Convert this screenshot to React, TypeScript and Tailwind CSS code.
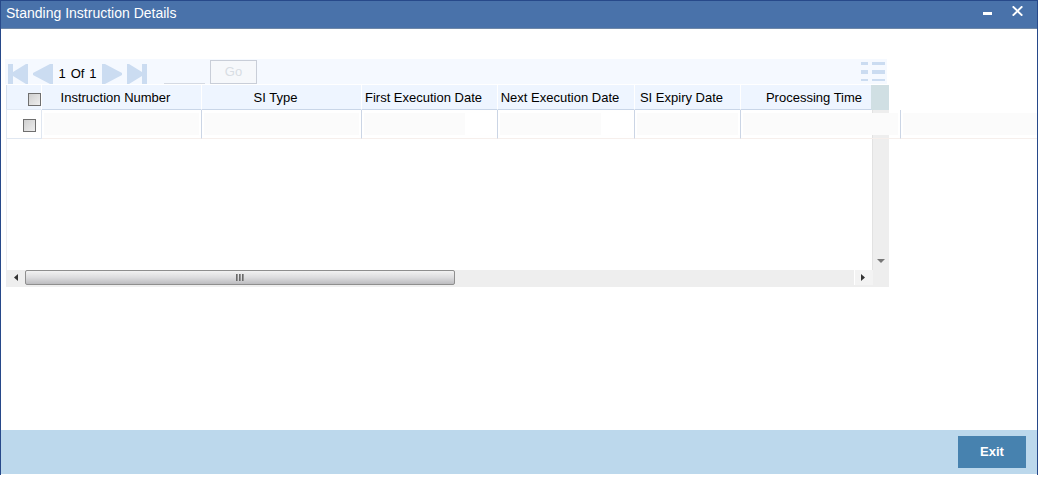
import React from "react";

const columns = [
  { name: "Instruction Number", span: 1, field: "w-[155px]", pad: "pr-3" },
  { name: "SI Type", span: 1, field: "w-[155px]", pad: "pr-3" },
  { name: "First Execution Date", span: 1, field: "w-[101px]", pad: "pr-3" },
  { name: "Next Execution Date", span: 1, field: "w-[101px]", pad: "pr-3" },
  { name: "SI Expiry Date", span: 1, field: "w-[101px]", pad: "pr-3" },
  { name: "Processing Time", span: 3, field: "w-[155px]", pad: "pl-4" },
];

function Check({ label }: { label: string }) {
  return (
    <input
      type="checkbox"
      aria-label={label}
      className="block size-[13px] appearance-none border border-[#6f6f6f] bg-linear-to-br from-[#cfcfcf] to-[#eeeeee]"
    />
  );
}

function Pager() {
  return (
    <div className="-ml-px flex h-[25px] w-[882px] items-end bg-[#f5f9ff] pr-0.5 pl-[3px] text-[#cbdcf1]">
      <button aria-label="First page">
        <svg width="20" height="20" viewBox="0 0 20 20" fill="currentColor" className="block">
          <path d="M0 0h5v8L18 0h2v20h-2L5 12v8H0z" />
        </svg>
      </button>
      <button aria-label="Previous page" className="ml-[5px]">
        <svg width="20" height="20" viewBox="0 0 20 20" fill="currentColor" className="block">
          <path d="M0 9L17 0h3v20h-3L0 11z" />
        </svg>
      </button>
      <div className="flex w-[49px] justify-center gap-[5px] text-[13px] leading-5 text-black">
        <span>1</span>
        <span>Of</span>
        <span>1</span>
      </div>
      <button aria-label="Next page">
        <svg width="20" height="20" viewBox="0 0 20 20" fill="currentColor" className="block">
          <path d="M20 9L3 0H0v20h3L20 11z" />
        </svg>
      </button>
      <button aria-label="Last page" className="ml-[5px]">
        <svg width="20" height="20" viewBox="0 0 20 20" fill="currentColor" className="block">
          <path d="M20 0h-5v8L2 0H0v20h2l13-8v8h5z" />
        </svg>
      </button>
      <input
        aria-label="Go to page"
        className="ml-[17px] h-5 w-[41px] border-b border-[#d5dae3] bg-transparent text-[13px]"
      />
      <button className="ml-[5px] h-6 w-[47px] border border-[#c9ced8] bg-[#f6f8fb] text-[13px] text-[#d8dde3]">
        Go
      </button>
      <button aria-label="Single record view" className="ml-auto pb-[3px]">
        <svg width="24" height="19" viewBox="0 0 24 19" fill="currentColor" className="block">
          <path d="M0 0h7v3H0zM11 0h13v3H11zM0 8h7v4H0zM11 8h13v4H11zM0 17h7v2H0zM11 17h13v2H11z" />
        </svg>
      </button>
    </div>
  );
}

function RecordTable() {
  return (
    <table className="z-10 col-start-1 row-start-1 w-full table-fixed border-separate border-spacing-0 self-start">
      <colgroup>
        <col className="w-9" />
        <col className="w-[160px]" />
        <col className="w-[160px]" />
        <col className="w-[136px]" />
        <col className="w-[137px]" />
        <col className="w-[106px]" />
        <col className="w-[130px]" />
        <col className="w-[18px]" />
        <col className="w-3" />
        <col />
      </colgroup>
      <thead>
        <tr className="h-[25px] text-[13px] leading-4">
          <th className="border-r border-r-white border-b border-b-[#e3ebf6] border-l border-l-[#d5dfee] bg-[#eef5ff] p-0">
            <div className="flex justify-end pt-1">
              <Check label="Select all" />
            </div>
          </th>
          {columns.map((c, i) => (
            <th
              key={c.name}
              className={`border-b border-b-[#c9d6e8] bg-[#eef5ff] p-0 pt-px font-normal whitespace-nowrap ${
                i < 5 ? "border-r border-r-white" : ""
              } ${c.pad}`}
            >
              {c.name}
            </th>
          ))}
          <td className="bg-[#d0dfe3] p-0" />
        </tr>
      </thead>
      <tbody>
        <tr className="h-[29px]">
          <td className="border-r border-b border-l border-[#e0e7f1] p-0 pt-0.5 pl-4">
            <Check label="Select record" />
          </td>
          {columns.map((c) => (
            <td
              key={c.name}
              colSpan={c.span}
              className="border-r border-b border-r-[#cbd5e5] border-b-[#f6efec] p-0 pl-0.5"
            >
              <input aria-label={c.name} className={`block h-[22px] bg-[#fbfbfb] text-[13px] ${c.field}`} />
            </td>
          ))}
          <td className="border-b border-[#f6efec] p-0 pl-0.5">
            <input aria-label="Next field" className="block h-[22px] w-full bg-[#fbfbfb] text-[13px]" />
          </td>
        </tr>
      </tbody>
    </table>
  );
}

function ScrollBars() {
  return (
    <div className="col-start-1 row-start-1 flex w-[883px] flex-col pt-[25px]">
      <div className="flex h-40 border-l border-[#ececf0]">
        <div className="flex-1" />
        <div className="flex w-[17px] items-end justify-center border-l border-[#e2e2e2] bg-[#eeeeee] pb-[7px]">
          <svg width="8" height="4" viewBox="0 0 8 4" fill="#777">
            <path d="M0 0h8L4 4z" />
          </svg>
        </div>
      </div>
      <div className="flex h-[17px] items-start border-l border-[#ececf0] bg-[#eeeeee]">
        <div className="flex h-[15px] w-[18px] items-center justify-center pr-px">
          <svg width="4" height="7" viewBox="0 0 4 7" fill="#333">
            <path d="M4 0v7L0 3.500z" />
          </svg>
        </div>
        <div className="flex h-[15px] w-[430px] items-center justify-center gap-px rounded-xs border border-[#8e8e8e] bg-linear-to-b from-[#f2f2f2] via-[#dcdcde] to-[#bcbcbf]">
          <span className="h-[7px] w-0.5 bg-linear-to-r from-[#555] to-[#aaa]" />
          <span className="h-[7px] w-0.5 bg-linear-to-r from-[#555] to-[#aaa]" />
          <span className="h-[7px] w-0.5 bg-linear-to-r from-[#555] to-[#aaa]" />
        </div>
        <div className="ml-auto flex h-[15px] w-[19px] items-center justify-center border-l border-white bg-[#f3f3f3] pr-0.5">
          <svg width="4" height="7" viewBox="0 0 4 7" fill="#333">
            <path d="M0 0v7L4 3.500z" />
          </svg>
        </div>
        <div className="w-4" />
      </div>
    </div>
  );
}

export default function App() {
  return (
    <div className="overflow-hidden bg-white font-['Liberation_Sans',Arial,sans-serif] text-black">
      <section className="flex min-h-[475px] flex-col border-x border-t border-[#27498a] pb-px">
        <header className="flex h-7 items-center justify-between border-b border-[#6f88a8] bg-[#4972aa] pr-3.5 pl-[5px] text-white">
          <h1 className="pb-1 text-[14px] leading-5">Standing Instruction Details</h1>
          <div className="flex items-center gap-5 pb-2">
            <button aria-label="Minimize">
              <svg width="9" height="11" viewBox="0 0 9 11" fill="currentColor" className="block">
                <path d="M0 7h9v3H0z" />
              </svg>
            </button>
            <button aria-label="Close">
              <svg width="11" height="10" viewBox="0 0 11 10" stroke="currentColor" strokeWidth="2" className="block">
                <path d="M.7 .4l9.600 9.200M10.300 .4L.7 9.600" />
              </svg>
            </button>
          </div>
        </header>
        <main className="flex-1 pt-[30px] pl-[5px]">
          <Pager />
          <div className="grid grid-cols-1 pt-px">
            <ScrollBars />
            <RecordTable />
          </div>
        </main>
        <footer className="flex h-11 items-center justify-end bg-[#bcd8ec] pr-[11px]">
          <button className="h-8 w-[68px] bg-[#4782af] text-[13px] font-bold text-white">Exit</button>
        </footer>
      </section>
    </div>
  );
}
